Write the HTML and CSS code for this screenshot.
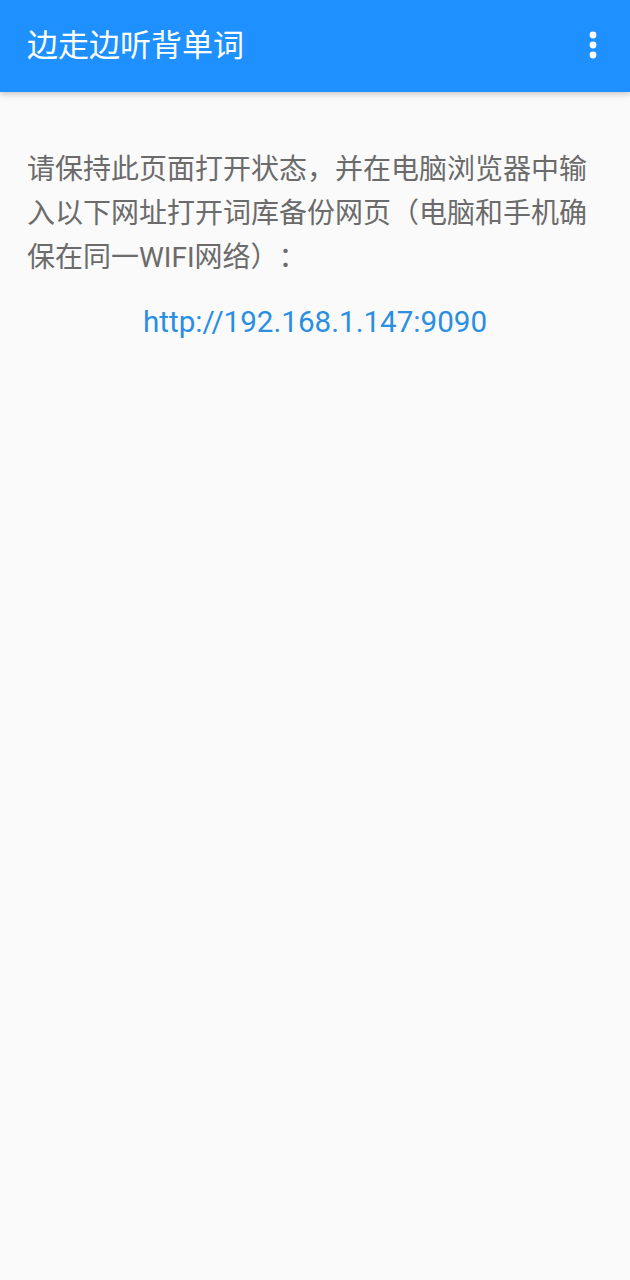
FILE: index.html
```html
<!DOCTYPE html>
<html lang="zh">
<head>
<meta charset="utf-8">
<title>边走边听背单词</title>
<link rel="stylesheet" href="styles.css">
</head>
<body>
<header class="appbar">
  <h1 class="title">边走边听背单词</h1>
  <div class="menu" aria-label="更多">
    <svg width="8" height="28" viewBox="0 0 8 28"><circle cx="4" cy="4" r="3.4" fill="#fff"/><circle cx="4" cy="14" r="3.4" fill="#fff"/><circle cx="4" cy="24" r="3.4" fill="#fff"/></svg>
  </div>
</header>
<main class="content">
  <p class="desc">请保持此页面打开状态，并在电脑浏览器中输入以下网址打开词库备份网页（电脑和手机确保在同一WIFI网络）：</p>
  <p class="url">http://192.168.1.147:9090</p>
</main>
</body>
</html>
```

FILE: styles.css
```css
html, body {
  margin: 0;
  padding: 0;
  background: #fafafa;
  font-family: Roboto, "Noto Sans CJK SC", sans-serif;
}
.appbar {
  height: 92px;
  background: #1e90ff;
  display: flex;
  align-items: center;
  justify-content: space-between;
  padding: 0 33px 0 27px;
  box-shadow: 0 2px 6px rgba(0,0,0,0.22);
  position: relative;
}
.title {
  margin: 0;
  font-size: 31px;
  font-weight: normal;
  color: #fff;
  line-height: 1;
  padding-bottom: 2px;
}
.menu {
  display: flex;
  align-items: center;
  padding-bottom: 2px;
}
.menu svg { display: block; }
.content {
  padding: 56px 27px 0 27px;
}
.desc {
  margin: 0;
  font-size: 28px;
  line-height: 44px;
  color: #6b6b6b;
  text-spacing-trim: space-all;
}
.url {
  margin: 22px 0 0 0;
  text-align: center;
  font-size: 29.6px;
  line-height: 40px;
  color: #2a8fe0;
}
```
